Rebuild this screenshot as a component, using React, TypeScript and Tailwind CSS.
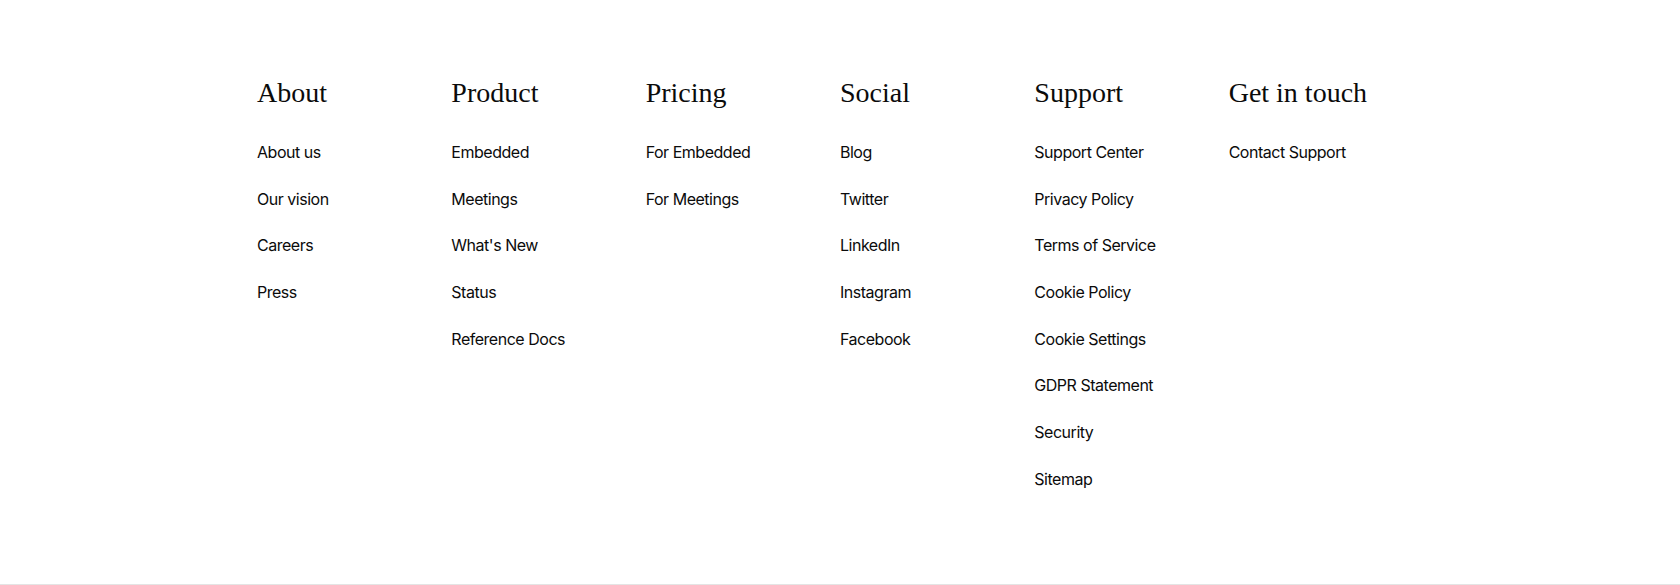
import React from 'react';

type FooterColumn = {
  title: string;
  links: string[];
};

const columns: FooterColumn[] = [
  { title: 'About', links: ['About us', 'Our vision', 'Careers', 'Press'] },
  { title: 'Product', links: ['Embedded', 'Meetings', "What's New", 'Status', 'Reference Docs'] },
  { title: 'Pricing', links: ['For Embedded', 'For Meetings'] },
  { title: 'Social', links: ['Blog', 'Twitter', 'LinkedIn', 'Instagram', 'Facebook'] },
  {
    title: 'Support',
    links: [
      'Support Center',
      'Privacy Policy',
      'Terms of Service',
      'Cookie Policy',
      'Cookie Settings',
      'GDPR Statement',
      'Security',
      'Sitemap',
    ],
  },
  { title: 'Get in touch', links: ['Contact Support'] },
];

export default function App() {
  return (
    <footer className="bg-white h-[585px] border-b border-[#e4e4e4] text-[#0b0b0b]">
      <div className="mx-auto w-[1166px] pt-[77px] grid grid-cols-6">
        {columns.map((col) => (
          <div key={col.title} className="flex flex-col">
            {/* Column heading */}
            <h3 className="font-['Liberation_Serif',serif] text-[28px] leading-[32px] font-normal">
              {col.title}
            </h3>
            <ul className="mt-[31px] flex flex-col gap-[22.7px]">
              {col.links.map((link) => (
                <li key={link}>
                  <a
                    href="#"
                    className="font-['Inter',sans-serif] text-[16px] leading-[24px] tracking-[-0.03em] hover:underline"
                  >
                    {link}
                  </a>
                </li>
              ))}
            </ul>
          </div>
        ))}
      </div>
    </footer>
  );
}
